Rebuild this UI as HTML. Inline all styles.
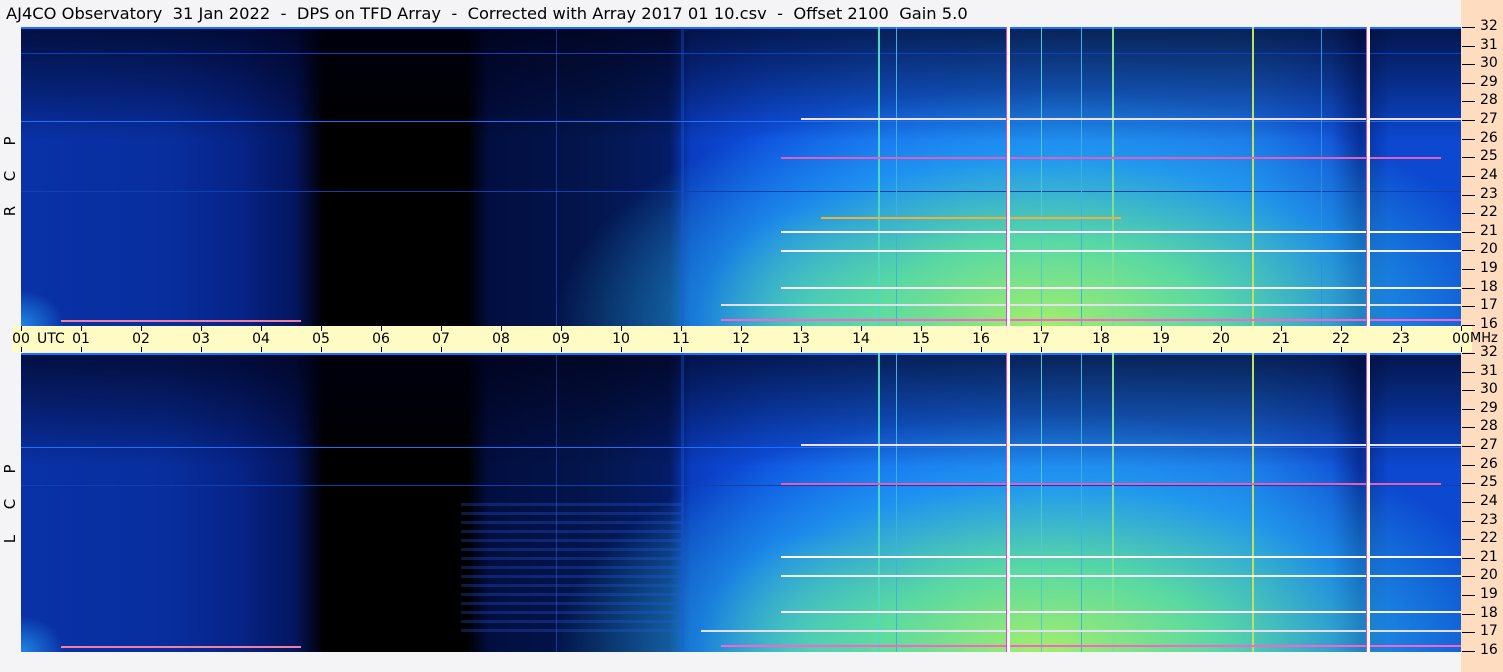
<!DOCTYPE html><html><head><meta charset="utf-8"><style>
body{margin:0;width:1503px;height:672px;background:#f4f4f6;position:relative;overflow:hidden;font-family:"DejaVu Sans","Liberation Sans",sans-serif;}
.t{position:absolute;left:6px;top:4px;font-size:16.3px;color:#000;white-space:pre;}
.peach{position:absolute;left:1461px;top:0;width:42px;height:672px;background:#fddcc0;}
.spec{position:absolute;left:21px;width:1440px;height:299px;overflow:hidden;
background:
linear-gradient(180deg,rgba(0,0,20,.7) 0%,rgba(0,0,20,.35) 20%,rgba(0,0,0,0) 38%),
radial-gradient(ellipse 34% 80% at 71% 100%,rgba(170,245,100,.95) 0%,rgba(100,235,150,.85) 35%,rgba(40,190,240,.5) 70%,rgba(0,0,0,0) 100%),
radial-gradient(ellipse 8% 40% at 55% 100%,rgba(100,220,170,.6),rgba(0,0,0,0)),
radial-gradient(ellipse 3% 12% at 0% 100%,rgba(40,170,255,.7),rgba(0,0,0,0)),
linear-gradient(90deg,#0932a8 0%,#082e9e 10%,#062488 15%,#041660 19%,#000 21%,#000 31%,#020e40 32.5%,#03164e 40%,#041c66 45%,#0a3cc0 46.5%,#0e50e0 52%,#1464f0 60%,#1a72f0 72%,#1a6ee8 85%,#1254d8 91%,#08309a 93%,#0c48d0 95%,#0c48d0 100%);}
.v,.h{position:absolute;}
.v{top:0;height:100%;}
.ax{position:absolute;left:12px;top:326px;width:1460px;height:26px;background:#fefbc4;}
.ax span{position:absolute;top:5px;font-size:14px;transform:translateX(-50%);white-space:nowrap;}
.ax b{position:absolute;top:5px;font-size:14px;font-weight:normal;white-space:nowrap;}
.ax i{position:absolute;width:1px;height:5px;background:#000;}
.rt{position:absolute;left:1462px;font-size:14px;}
.rt i{position:absolute;left:0;top:0;width:13px;height:1px;background:#000;}
.rt span{position:absolute;left:18px;top:-9px;}
.lab{position:absolute;left:2px;font-size:15px;transform:rotate(-90deg);width:16px;text-align:center;}
</style></head><body>
<div class="t">AJ4CO Observatory  31 Jan 2022  -  DPS on TFD Array  -  Corrected with Array 2017 01 10.csv  -  Offset 2100  Gain 5.0</div>
<div class="peach"></div>
<div class="lab" style="top:132px">P</div><div class="lab" style="top:167px">C</div><div class="lab" style="top:202px">R</div>
<div class="lab" style="top:460px">P</div><div class="lab" style="top:495px">C</div><div class="lab" style="top:530px">L</div>

<div class="spec" style="top:27px">
<div class="h" style="left:0;top:0;width:100%;height:2px;background:#1a70ff"></div>
<div class="h" style="left:0;top:26px;width:100%;height:1px;background:#1040c0"></div>
<div class="h" style="left:0;top:94px;width:100%;height:1px;background:#2070ff"></div>
<div class="h" style="left:0;top:164px;width:100%;height:1px;background:#1040b0"></div>
<div class="v" style="left:535px;width:1px;background:rgba(40,100,230,.5)"></div>
<div class="v" style="left:660px;width:3px;background:rgba(30,90,230,.35)"></div>
<div class="v" style="left:857px;width:2px;background:#50d8c0"></div>
<div class="v" style="left:875px;width:1px;background:#40b0e0"></div>
<div class="v" style="left:1020px;width:1px;background:#50c8d0"></div>
<div class="v" style="left:1060px;width:1px;background:#40b0e0"></div>
<div class="v" style="left:1091px;width:2px;background:#80e090"></div>
<div class="v" style="left:1231px;width:2px;background:#c0e060"></div>
<div class="v" style="left:1300px;width:1px;background:#3090e0"></div>
<div class="h" style="left:780px;top:91px;width:660px;height:2px;background:#f0e0f0"></div>
<div class="h" style="left:760px;top:130px;width:660px;height:2px;background:#e060c0"></div>
<div class="h" style="left:760px;top:204px;width:680px;height:2px;background:#fff"></div>
<div class="h" style="left:760px;top:223px;width:680px;height:2px;background:#f0f0ff"></div>
<div class="h" style="left:760px;top:260px;width:680px;height:2px;background:#f8f0f8"></div>
<div class="h" style="left:700px;top:277px;width:740px;height:2px;background:#e0e0f0"></div>
<div class="h" style="left:700px;top:292px;width:740px;height:2px;background:#ff60d0"></div>
<div class="h" style="left:800px;top:190px;width:300px;height:2px;background:#f0b040"></div>
<div class="h" style="left:40px;top:293px;width:240px;height:2px;background:#f080a0"></div>
<div class="v" style="left:985px;width:3px;background:#fff;border-left:1px solid #e040e0"></div>
<div class="v" style="left:1345px;width:3px;background:#fff;border-left:1px solid #e040e0"></div>
</div>

<div class="spec" style="top:353px">
<div class="h" style="left:0;top:0;width:100%;height:2px;background:#1a70ff"></div>
<div class="h" style="left:0;top:94px;width:100%;height:1px;background:#2070ff"></div>
<div class="h" style="left:0;top:132px;width:100%;height:1px;background:#1040b0"></div>
<div class="h" style="left:440px;top:150px;width:220px;height:130px;background:repeating-linear-gradient(180deg,rgba(40,90,220,.3) 0 3px,rgba(0,0,0,0) 3px 9px)"></div>
<div class="v" style="left:535px;width:1px;background:rgba(40,100,230,.5)"></div>
<div class="v" style="left:660px;width:3px;background:rgba(30,90,230,.35)"></div>
<div class="v" style="left:857px;width:2px;background:#50d8c0"></div>
<div class="v" style="left:875px;width:1px;background:#40b0e0"></div>
<div class="v" style="left:1020px;width:1px;background:#50c8d0"></div>
<div class="v" style="left:1060px;width:1px;background:#40b0e0"></div>
<div class="v" style="left:1091px;width:2px;background:#80e090"></div>
<div class="v" style="left:1231px;width:2px;background:#c0e060"></div>
<div class="h" style="left:780px;top:91px;width:660px;height:2px;background:#f0e0f0"></div>
<div class="h" style="left:760px;top:130px;width:660px;height:2px;background:#e060c0"></div>
<div class="h" style="left:760px;top:203px;width:680px;height:2px;background:#fff"></div>
<div class="h" style="left:760px;top:222px;width:680px;height:2px;background:#f0f0ff"></div>
<div class="h" style="left:760px;top:258px;width:680px;height:2px;background:#f8f0f8"></div>
<div class="h" style="left:680px;top:277px;width:760px;height:2px;background:#e0e0f0"></div>
<div class="h" style="left:700px;top:292px;width:740px;height:2px;background:#ff60d0"></div>
<div class="h" style="left:40px;top:293px;width:240px;height:2px;background:#f080a0"></div>
<div class="v" style="left:985px;width:3px;background:#fff;border-left:1px solid #e040e0"></div>
<div class="v" style="left:1345px;width:3px;background:#fff;border-left:1px solid #e040e0"></div>
</div>

<div class="ax" id="ax"></div>
<div id="rt"></div>
<script>
var ax=document.getElementById('ax'),h='';
for(var i=0;i<=24;i++){var x=9+i*60;var l=(i%24<10?'0':'')+(i%24);
h+='<i style="left:'+x+'px;top:0"></i><i style="left:'+x+'px;top:21px"></i>';
h+='<span style="left:'+x+'px">'+l+'</span>';}
h+='<b style="left:25px">UTC</b><b style="left:1458px;font-size:13px">MHz</b>';
ax.innerHTML=h;
var rt=document.getElementById('rt'),r='';
[27,353].forEach(function(t){for(var m=32;m>=16;m--){var y=t+(32-m)*18.62;
r+='<div class="rt" style="top:'+Math.round(y)+'px"><i></i><span>'+m+'</span></div>';}});
rt.innerHTML=r;
</script>
</body></html>
